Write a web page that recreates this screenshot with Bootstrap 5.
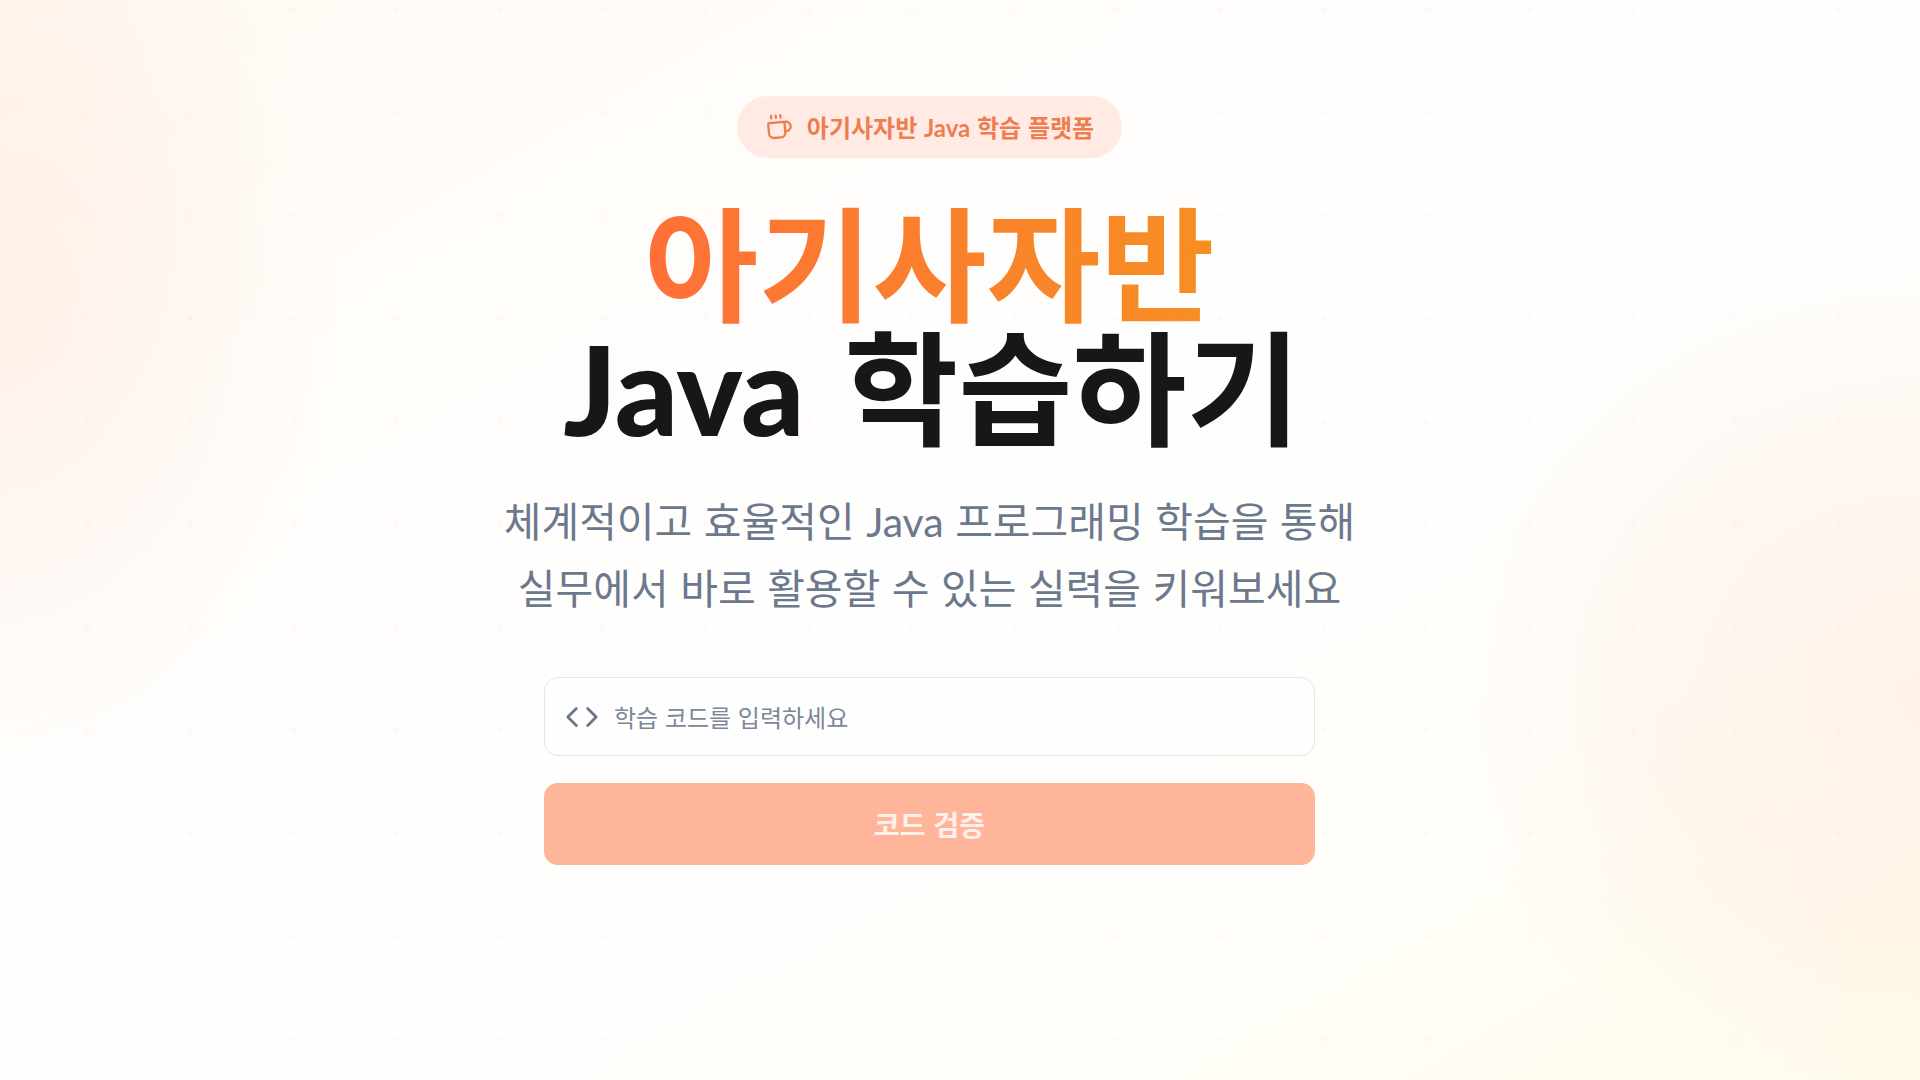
<!DOCTYPE html>
<html lang="ko">
<head>
<meta charset="utf-8">
<meta name="viewport" content="width=device-width, initial-scale=1">
<title>아기사자반 Java 학습하기</title>
<link href="https://cdn.jsdelivr.net/npm/bootstrap@5.3.0/dist/css/bootstrap.min.css" rel="stylesheet">
<style>
body {
  font-family: "Noto Sans CJK KR", "Noto Sans", sans-serif;
  color: #171717;
  background-color: #fff;
  background-image:
    radial-gradient(circle at 50% 50%, rgba(255, 107, 53, .035) 0 2px, transparent 3px),
    radial-gradient(ellipse 18% 44% at 0% 28%, rgba(255, 107, 53, .07), rgba(255, 107, 53, .035) 55%, transparent),
    radial-gradient(ellipse 25% 40% at 100% 64%, rgba(255, 107, 53, .065), rgba(255, 107, 53, .05) 55%, transparent),
    linear-gradient(150deg, #fff9f2 0%, #fffdfa 25%, #fefefe 50%, #fffefa 75%, #fffcec 100%);
  background-size: 103px 103px, auto, auto, auto;
  background-position: 36px 61px, 0 0, 0 0, 0 0;
  background-repeat: repeat, no-repeat, no-repeat, no-repeat;
}
.latin { font-family: Lato, sans-serif; line-height: 0; }
.hero { padding: 96px 61px 96px 0; }
.hero-pill { height: 62px; padding: 0 28px; gap: 14px; font-size: 24px; font-weight: 700; color: #ef7d52; background: #ffebe3; }
.hero-title { margin: 38px 0 42px; font-size: 124px; line-height: 124px; font-weight: 700; }
.hero-title .latin { margin: 0 5px; font-weight: 900; }
.hero-accent { color: transparent; background: linear-gradient(90deg, #ff7038, #f68f22); -webkit-background-clip: text; background-clip: text; }
.hero-copy { margin-bottom: 57px; font-size: 41px; line-height: 67px; color: #6c788c; }
.code-form { max-width: 771px; gap: 27px; }
.code-field { height: 79px; padding-left: 20px; gap: 15px; border: 1px solid #e3e5ea; border-radius: 14px; background: #fefefe; color: #6c788c; }
.code-field .form-control { font-size: 24px; color: #171717; }
.code-field .form-control::placeholder { color: #7c879a; }
.btn-verify, .btn-verify:disabled { height: 82px; border: 0; border-radius: 14px; font-size: 28px; font-weight: 700; color: #fff1ea; background: #ffb599; opacity: 1; }
</style>
</head>
<body class="min-vh-100">
<main class="hero d-flex flex-column align-items-center text-center">
  <div class="hero-pill d-inline-flex align-items-center rounded-pill">
    <svg width="28" height="28" viewBox="0 0 24 24" fill="none" stroke="currentColor" stroke-width="2" stroke-linecap="round" stroke-linejoin="round" aria-hidden="true"><g transform="rotate(-5 12 12)"><path d="M10 2v2M14 2v2M6 2v2"/><path d="M16 8a1 1 0 0 1 1 1v8a4 4 0 0 1-4 4H7a4 4 0 0 1-4-4V9a1 1 0 0 1 1-1h14a4 4 0 1 1 0 8h-1"/></g></svg>
    <span>아기사자반 <span class="latin">Java</span> 학습 플랫폼</span>
  </div>
  <h1 class="hero-title"><span class="hero-accent">아기사자반</span><br><span class="latin">Java</span> 학습하기</h1>
  <p class="hero-copy">체계적이고 효율적인 <span class="latin">Java</span> 프로그래밍 학습을 통해<br>실무에서 바로 활용할 수 있는 실력을 키워보세요</p>
  <form class="code-form w-100 d-flex flex-column">
    <div class="code-field d-flex align-items-center">
      <label for="code" class="d-flex" aria-label="학습 코드"><svg width="34" height="34" viewBox="0 0 24 24" fill="none" stroke="currentColor" stroke-width="2" stroke-linecap="round" stroke-linejoin="round" aria-hidden="true"><path d="m16 18 6-6-6-6M8 6l-6 6 6 6"/></svg></label>
      <input id="code" type="text" class="form-control border-0 bg-transparent shadow-none p-0" placeholder="학습 코드를 입력하세요">
    </div>
    <button type="submit" class="btn btn-verify w-100" disabled>코드 검증</button>
  </form>
</main>
<script src="https://cdn.jsdelivr.net/npm/bootstrap@5.3.0/dist/js/bootstrap.bundle.min.js"></script>
</body>
</html>
